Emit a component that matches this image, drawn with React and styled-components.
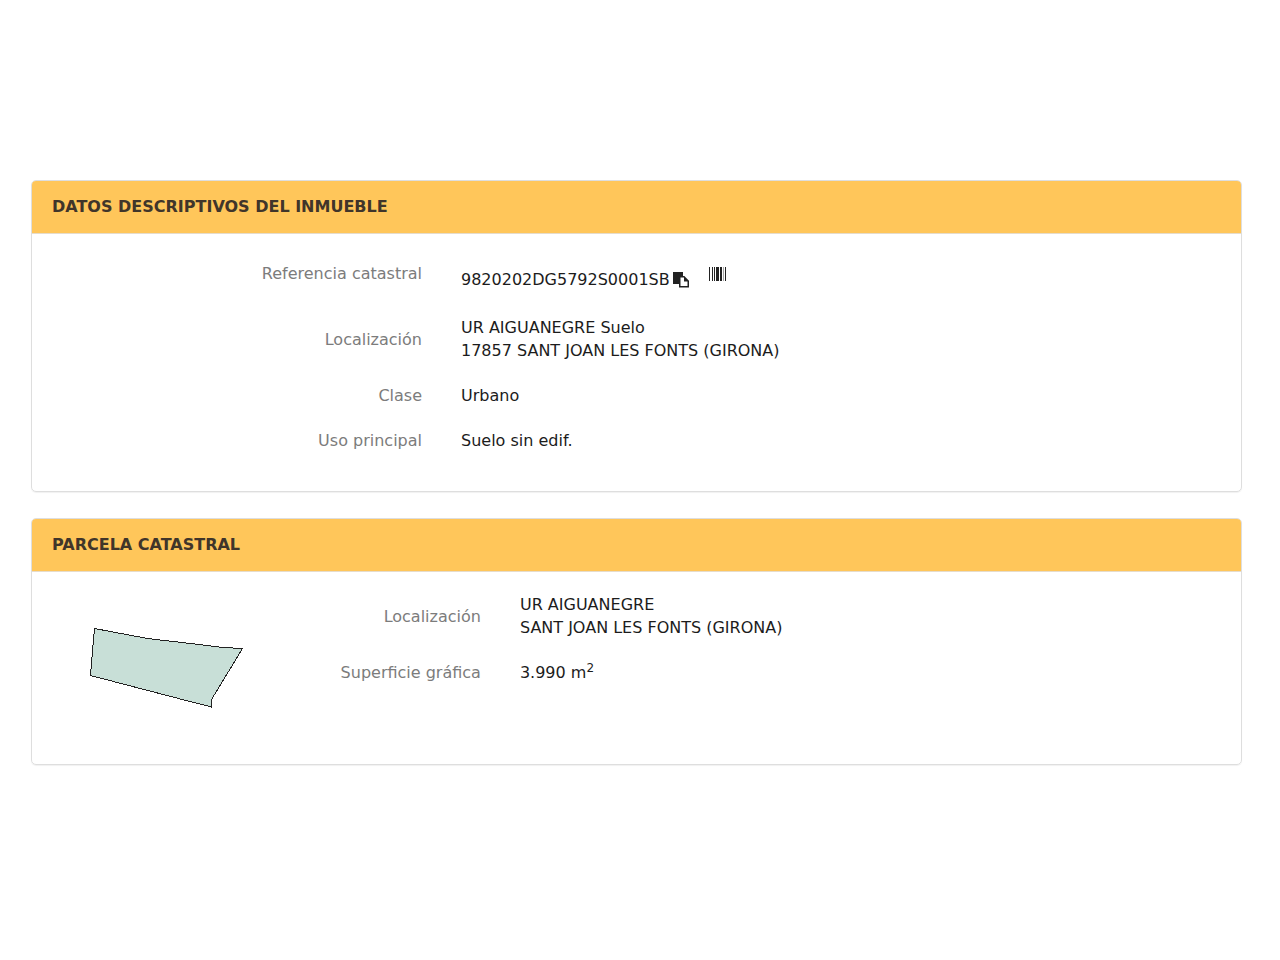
import React from 'react';
import styled, { createGlobalStyle } from 'styled-components';

const GlobalStyle = createGlobalStyle`
  *, *::before, *::after { box-sizing: border-box; }
  body {
    margin: 0;
    background: #fff;
    color: #1c1c1c;
    font-family: Verdana, "DejaVu Sans", sans-serif;
    font-size: 16px;
    line-height: 23px;
  }
`;

const Page = styled.main`
  display: flex;
  flex-direction: column;
  gap: 26px;
  padding: 180px 38px 40px 31px;
`;

const Panel = styled.section`
  border: 1px solid #dedede;
  border-radius: 5px;
  box-shadow: 0 1px 1px rgba(0, 0, 0, 0.06);
  overflow: hidden;
`;

const PanelHeader = styled.header`
  padding: 14px 20px 15px;
  background: #ffc65a;
  border-bottom: 1px solid #e6dccb;
`;

const PanelTitle = styled.h2`
  margin: 0;
  color: #40352a;
  font-size: 16px;
  font-weight: 700;
  line-height: 23px;
`;

const PanelBody = styled.div`
  padding: 17px 0 28px;
`;

const ParcelBody = styled.div`
  display: grid;
  grid-template-columns: 2fr 7fr;
`;

const Figure = styled.div`
  display: flex;
  align-items: center;
  justify-content: center;
  height: 192px;
`;

const ParcelFields = styled.div`
  padding-top: 10px;
`;

const Fields = styled.dl`
  margin: 0;
`;

const Row = styled.div`
  display: grid;
  grid-template-columns: 1fr ${(p) => p.$valueSpan}fr;
  column-gap: 39px;
  align-items: center;
  padding: 11px 0;
`;

const Label = styled.dt`
  color: #7c7c7c;
  text-align: right;
  white-space: nowrap;
  align-self: ${(p) => (p.$top ? 'start' : 'center')};
`;

const Value = styled.dd`
  margin: 0;
`;

const Reference = styled.dd`
  display: flex;
  align-items: flex-start;
  margin: 0;
  min-height: 32px;
`;

const ReferenceCode = styled.span`
  padding-top: 6px;
`;

const IconButton = styled.button`
  display: flex;
  padding: 0;
  border: 0;
  background: none;
  color: #222;
  cursor: pointer;
  margin: ${(p) => p.$margin};
`;

const Superscript = styled.sup`
  font-size: 12px;
  line-height: 0;
`;

const CopyIcon = () => (
  <svg width="16" height="16" viewBox="0 0 16 16" aria-hidden="true">
    <path d="M0 0H10V4H6V12H0Z" fill="currentColor" />
    <path d="M6.75 4.75H11L15.25 9V14.75H6.75Z" fill="#fff" stroke="currentColor" strokeWidth="1.5" />
    <path d="M11 4.5L15.5 9.5H11Z" fill="currentColor" />
  </svg>
);

const BarcodeIcon = () => (
  <svg width="18" height="14" viewBox="0 0 18 14" shapeRendering="crispEdges" fill="currentColor" aria-hidden="true">
    <rect x="0" width="1" height="14" />
    <rect x="3" width="1" height="14" />
    <rect x="5" width="1" height="14" />
    <rect x="7" width="3" height="14" />
    <rect x="11" width="2" height="14" />
    <rect x="14" width="1" height="14" opacity="0.4" />
    <rect x="16" width="1" height="14" />
  </svg>
);

const ParcelShape = () => (
  <svg width="152" height="80" viewBox="0 0 152 80" overflow="visible" role="img" aria-label="Parcela">
    <path
      d="M4.5 .5L57.5 10.5L100.5 15.5L133.5 19.5L152.5 20.5L121.5 71.5V79L88.5 70.5L.5 47.5L1.5 34.5Z"
      fill="#c8dfd7"
      stroke="#222"
      strokeWidth="1"
      shapeRendering="crispEdges"
    />
  </svg>
);

export default function App() {
  return (
    <>
      <GlobalStyle />
      <Page>
        <Panel>
          <PanelHeader>
            <PanelTitle>DATOS DESCRIPTIVOS DEL INMUEBLE</PanelTitle>
          </PanelHeader>
          <PanelBody>
            <Fields>
              <Row $valueSpan={2}>
                <Label $top>Referencia catastral</Label>
                <Reference>
                  <ReferenceCode>9820202DG5792S0001SB</ReferenceCode>
                  <IconButton type="button" aria-label="Copiar referencia" $margin="10px 0 0 3px">
                    <CopyIcon />
                  </IconButton>
                  <IconButton type="button" aria-label="Código de barras" $margin="5px 0 0 20px">
                    <BarcodeIcon />
                  </IconButton>
                </Reference>
              </Row>
              <Row $valueSpan={2}>
                <Label>Localización</Label>
                <Value>
                  UR AIGUANEGRE Suelo
                  <br />
                  17857 SANT JOAN LES FONTS (GIRONA)
                </Value>
              </Row>
              <Row $valueSpan={2}>
                <Label>Clase</Label>
                <Value>Urbano</Value>
              </Row>
              <Row $valueSpan={2}>
                <Label>Uso principal</Label>
                <Value>Suelo sin edif.</Value>
              </Row>
            </Fields>
          </PanelBody>
        </Panel>

        <Panel>
          <PanelHeader>
            <PanelTitle>PARCELA CATASTRAL</PanelTitle>
          </PanelHeader>
          <ParcelBody>
            <Figure>
              <ParcelShape />
            </Figure>
            <ParcelFields>
              <Fields>
                <Row $valueSpan={4}>
                  <Label>Localización</Label>
                  <Value>
                    UR AIGUANEGRE
                    <br />
                    SANT JOAN LES FONTS (GIRONA)
                  </Value>
                </Row>
                <Row $valueSpan={4}>
                  <Label>Superficie gráfica</Label>
                  <Value>
                    3.990 m<Superscript>2</Superscript>
                  </Value>
                </Row>
              </Fields>
            </ParcelFields>
          </ParcelBody>
        </Panel>
      </Page>
    </>
  );
}
